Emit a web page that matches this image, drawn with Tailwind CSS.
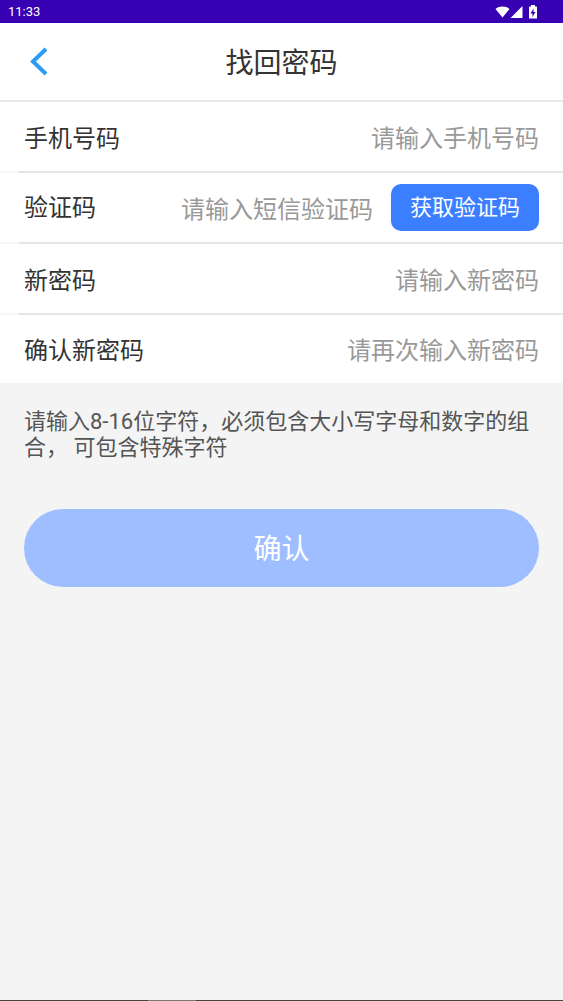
<!DOCTYPE html>
<html lang="zh-CN">
<head>
<meta charset="utf-8">
<meta name="viewport" content="width=device-width, initial-scale=1">
<title>找回密码</title>
<script src="https://cdn.jsdelivr.net/npm/@tailwindcss/browser@4"></script>
</head>
<body class="flex min-h-screen flex-col bg-[#f4f4f4] font-[Roboto,'Noto_Sans_CJK_SC',sans-serif] text-[#333]">
  <div class="flex h-[23px] items-center justify-between bg-[#3700b3] pr-6 pl-2 text-white">
    <span class="text-[13px] leading-4">11:33</span>
    <div class="flex items-center">
      <svg class="h-3 w-[15px]" viewBox="0 0 15 12" fill="currentColor" aria-hidden="true"><path d="M7.500 11.500 0.500 3C4.500-.2 10.500-.2 14.500 3Z"/></svg>
      <svg class="h-3 w-[13px]" viewBox="0 0 13 12" fill="currentColor" aria-hidden="true"><path d="M0.500 12 12.500 0V12Z"/></svg>
      <svg class="ml-1 h-[14px] w-3" viewBox="0 0 12 14" aria-hidden="true"><path fill="currentColor" d="M4 0h4v1.500h1.500q.5 0 .5.500v11q0 .5-.5.500h-7q-.5 0-.5-.5V2q0-.5.500-.5H4Z"/><path fill="#3700b3" d="M6.500 3.500v3.500H8.500L5.500 12V8.500H3.500Z"/></svg>
    </div>
  </div>

  <header class="grid h-[79px] grid-cols-[1fr_auto_1fr] items-center border-b-2 border-[#e8e8e8] bg-white px-6">
    <button type="button" aria-label="返回" class="w-8 pl-1">
      <svg class="h-[30px] w-5" viewBox="0 0 20 30" fill="none" stroke="#2c9bf3" stroke-width="4" aria-hidden="true"><path d="M18 2 5 14.500 18 27"/></svg>
    </button>
    <h1 class="pt-1 text-[28px] leading-10">找回密码</h1>
  </header>

  <form>
    <div class="bg-white text-2xl">
      <div class="flex h-[71px] flex-col">
        <div class="flex flex-1 items-center justify-between px-6">
          <label for="phone" class="shrink-0 pt-1">手机号码</label>
          <input id="phone" type="tel" placeholder="请输入手机号码" class="min-w-0 flex-1 pt-1 text-right outline-none placeholder:text-[#999]">
        </div>
        <div class="h-[2px] border-l-[19px] border-[#f7f7f7] bg-[#e5e5e5]"></div>
      </div>
      <div class="flex h-[71px] flex-col">
        <div class="flex flex-1 items-center justify-between px-6">
          <label for="code" class="shrink-0">验证码</label>
          <input id="code" type="text" placeholder="请输入短信验证码" class="min-w-0 flex-1 pt-1 text-right outline-none placeholder:text-[#999]">
          <button type="button" class="ml-[18px] h-[47px] w-[148px] shrink-0 rounded-[10px] bg-[#3b7eff] text-[22px] text-white">获取验证码</button>
        </div>
        <div class="h-[2px] border-l-[19px] border-[#f7f7f7] bg-[#e5e5e5]"></div>
      </div>
      <div class="flex h-[71px] flex-col">
        <div class="flex flex-1 items-center justify-between px-6">
          <label for="password" class="shrink-0 pt-1">新密码</label>
          <input id="password" type="password" placeholder="请输入新密码" class="min-w-0 flex-1 pt-1 text-right outline-none placeholder:text-[#999]">
        </div>
        <div class="h-[2px] border-l-[19px] border-[#f7f7f7] bg-[#e5e5e5]"></div>
      </div>
      <div class="flex h-[68px] items-center justify-between px-6">
        <label for="confirm" class="shrink-0 pt-1">确认新密码</label>
        <input id="confirm" type="password" placeholder="请再次输入新密码" class="min-w-0 flex-1 pt-1 text-right outline-none placeholder:text-[#999]">
      </div>
    </div>

    <div class="px-6 pt-[26px]">
      <p class="text-[22px] leading-[26px] text-[#555]">请输入8-16位字符，必须包含大小写字母和数字的组合， 可包含特殊字符</p>
      <button type="submit" class="mt-12 h-[78px] w-full rounded-full bg-[#9ebeff] pt-1 text-[28px] text-white">确认</button>
    </div>
  </form>

  <div class="mt-auto flex h-px bg-[#444]" aria-hidden="true">
    <div class="ml-[148px] w-12 bg-[#777]"></div>
  </div>
</body>
</html>
